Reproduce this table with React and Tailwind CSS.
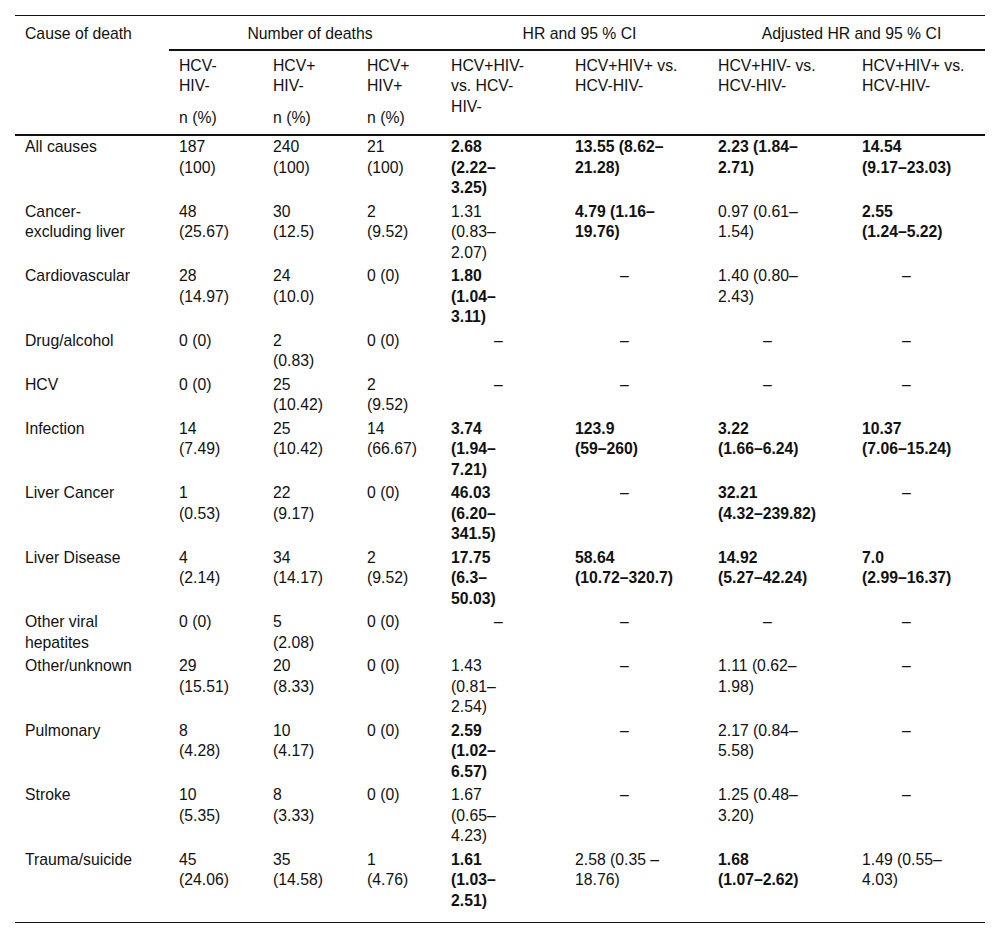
import React from "react";

const D = "dash";

const rows = [
  { c: ["All causes"], v: [["187", "(100)"], ["240", "(100)"], ["21", "(100)"], { b: 1, t: ["2.68", "(2.22–", "3.25)"] }, { b: 1, t: ["13.55 (8.62–", "21.28)"] }, { b: 1, t: ["2.23 (1.84–", "2.71)"] }, { b: 1, t: ["14.54", "(9.17–23.03)"] }] },
  { c: ["Cancer-", "excluding liver"], v: [["48", "(25.67)"], ["30", "(12.5)"], ["2", "(9.52)"], ["1.31", "(0.83–", "2.07)"], { b: 1, t: ["4.79 (1.16–", "19.76)"] }, ["0.97 (0.61–", "1.54)"], { b: 1, t: ["2.55", "(1.24–5.22)"] }] },
  { c: ["Cardiovascular"], v: [["28", "(14.97)"], ["24", "(10.0)"], ["0 (0)"], { b: 1, t: ["1.80", "(1.04–", "3.11)"] }, D, ["1.40 (0.80–", "2.43)"], D] },
  { c: ["Drug/alcohol"], v: [["0 (0)"], ["2", "(0.83)"], ["0 (0)"], D, D, D, D] },
  { c: ["HCV"], v: [["0 (0)"], ["25", "(10.42)"], ["2", "(9.52)"], D, D, D, D] },
  { c: ["Infection"], v: [["14", "(7.49)"], ["25", "(10.42)"], ["14", "(66.67)"], { b: 1, t: ["3.74", "(1.94–", "7.21)"] }, { b: 1, t: ["123.9", "(59–260)"] }, { b: 1, t: ["3.22", "(1.66–6.24)"] }, { b: 1, t: ["10.37", "(7.06–15.24)"] }] },
  { c: ["Liver Cancer"], v: [["1", "(0.53)"], ["22", "(9.17)"], ["0 (0)"], { b: 1, t: ["46.03", "(6.20–", "341.5)"] }, D, { b: 1, t: ["32.21", "(4.32–239.82)"] }, D] },
  { c: ["Liver Disease"], v: [["4", "(2.14)"], ["34", "(14.17)"], ["2", "(9.52)"], { b: 1, t: ["17.75", "(6.3–", "50.03)"] }, { b: 1, t: ["58.64", "(10.72–320.7)"] }, { b: 1, t: ["14.92", "(5.27–42.24)"] }, { b: 1, t: ["7.0", "(2.99–16.37)"] }] },
  { c: ["Other viral", "hepatites"], v: [["0 (0)"], ["5", "(2.08)"], ["0 (0)"], D, D, D, D] },
  { c: ["Other/unknown"], v: [["29", "(15.51)"], ["20", "(8.33)"], ["0 (0)"], ["1.43", "(0.81–", "2.54)"], D, ["1.11 (0.62–", "1.98)"], D] },
  { c: ["Pulmonary"], v: [["8", "(4.28)"], ["10", "(4.17)"], ["0 (0)"], { b: 1, t: ["2.59", "(1.02–", "6.57)"] }, D, ["2.17 (0.84–", "5.58)"], D] },
  { c: ["Stroke"], v: [["10", "(5.35)"], ["8", "(3.33)"], ["0 (0)"], ["1.67", "(0.65–", "4.23)"], D, ["1.25 (0.48–", "3.20)"], D] },
  { c: ["Trauma/suicide"], v: [["45", "(24.06)"], ["35", "(14.58)"], ["1", "(4.76)"], { b: 1, t: ["1.61", "(1.03–", "2.51)"] }, ["2.58 (0.35 –", "18.76)"], { b: 1, t: ["1.68", "(1.07–2.62)"] }, ["1.49 (0.55–", "4.03)"]] },
];

// dash left padding for columns 5..8 (index 3..6)
const dashPad = ["pl-[53px]", "pl-[55px]", "pl-[55px]", "pl-[50px]"];

function Lines({ lines }) {
  return (
    <>
      {lines.map((l, i) => (
        <div key={i} className="whitespace-nowrap">{l}</div>
      ))}
    </>
  );
}

export default function App() {
  return (
    <div
      className="bg-white w-[1000px] min-h-[937px] pt-[15px] pl-[15px] text-[#111] text-[15.75px] leading-[20.5px]"
      style={{ fontFamily: '"Liberation Sans", Arial, Helvetica, sans-serif' }}
    >
      <table className="table-fixed border-collapse w-[970px]">
        <colgroup>
          <col className="w-[154px]" />
          <col className="w-[94px]" />
          <col className="w-[94px]" />
          <col className="w-[84px]" />
          <col className="w-[124px]" />
          <col className="w-[143px]" />
          <col className="w-[144px]" />
          <col className="w-[133px]" />
        </colgroup>
        <thead>
          <tr>
            <th rowSpan={2} className="align-top text-left font-normal pl-[10px] pt-[8px] border-t border-t-[#111] border-b-2 border-b-[#111]">
              Cause of death
            </th>
            <th colSpan={3} className="align-top text-center font-normal pl-[10px] pt-[8px] pb-[4px] border-t border-t-[#111] border-b-2 border-b-[#111]">
              Number of deaths
            </th>
            <th colSpan={2} className="align-top text-center font-normal pl-[10px] pt-[8px] pb-[4px] border-t border-t-[#111] border-b-2 border-b-[#111]">
              HR and 95 % CI
            </th>
            <th colSpan={2} className="align-top text-center font-normal pl-[10px] pt-[8px] pb-[4px] border-t border-t-[#111] border-b-2 border-b-[#111]">
              Adjusted HR and 95 % CI
            </th>
          </tr>
          <tr>
            {[["HCV-", "HIV-"], ["HCV+", "HIV-"], ["HCV+", "HIV+"]].map((l, i) => (
              <th key={i} className="align-top text-left font-normal pl-[10px] pt-[5px] pb-[6px] border-b-2 border-b-[#111]">
                <Lines lines={l} />
                <div className="mt-[11px]">n (%)</div>
              </th>
            ))}
            {[
              ["HCV+HIV-", "vs. HCV-", "HIV-"],
              ["HCV+HIV+ vs.", "HCV-HIV-"],
              ["HCV+HIV- vs.", "HCV-HIV-"],
              ["HCV+HIV+ vs.", "HCV-HIV-"],
            ].map((l, i) => (
              <th key={i} className="align-top text-left font-normal pl-[10px] pt-[5px] pb-[6px] border-b-2 border-b-[#111]">
                <Lines lines={l} />
              </th>
            ))}
          </tr>
        </thead>
        <tbody>
          {rows.map((r, ri) => {
            const last = ri === rows.length - 1;
            const pad = last ? "pt-[1px] pb-[11px] border-b border-b-[#111]" : "pt-[1px] pb-[2px]";
            return (
              <tr key={ri}>
                <td className={`align-top pl-[10px] ${pad}`}>
                  <Lines lines={r.c} />
                </td>
                {r.v.map((cell, ci) => {
                  if (cell === D) {
                    return (
                      <td key={ci} className={`align-top ${dashPad[ci - 3]} ${pad}`}>
                        –
                      </td>
                    );
                  }
                  const bold = !Array.isArray(cell);
                  const lines = bold ? cell.t : cell;
                  return (
                    <td key={ci} className={`align-top pl-[10px] ${bold ? "font-bold" : ""} ${pad}`}>
                      <Lines lines={lines} />
                    </td>
                  );
                })}
              </tr>
            );
          })}
        </tbody>
      </table>
    </div>
  );
}
